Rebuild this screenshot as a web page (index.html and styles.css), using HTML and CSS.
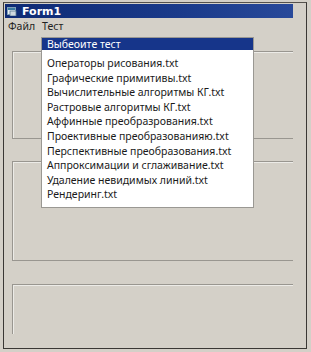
FILE: index.html
```html
<!DOCTYPE html>
<html>
    <head>
        <meta charset="utf-8">
        <title>Form1</title>
        <link rel="stylesheet" href="styles.css">
    </head>
    <body>
        <div class="window">
            <div class="title">
                <svg class="ico" width="10" height="9" viewBox="0 0 10 9">
                    <rect x="0.5" y="0.5" width="8" height="7" fill="#e8eef5" stroke="#7fa0b8"/>
                    <rect x="1" y="1" width="7" height="2" fill="#3a7aa0"/>
                    <rect x="3" y="4" width="6" height="5" fill="#cfd8e0" stroke="#5a7890" stroke-width="0.8"/>
                </svg>
                <span>Form1</span>
            </div>
            <div class="menu">
                <span class="item">Файл</span>
                <span class="item">Тест</span>
            </div>
            <div class="client">
                <div class="frame f1"></div>
                <div class="frame f2"></div>
                <div class="frame f3"></div>

                <div class="drop">
                    <div class="head">Выбеоите тест</div>
                    <ul class="list">
                        <li>Операторы рисования.txt</li>
                        <li>Графические примитивы.txt</li>
                        <li>Вычислительные алгоритмы КГ.txt</li>
                        <li>Растровые алгоритмы КГ.txt</li>
                        <li>Аффинные преобразрования.txt</li>
                        <li>Проективные преобразованияю.txt</li>
                        <li>Перспективные преобразования.txt</li>
                        <li>Аппроксимации и сглаживание.txt</li>
                        <li>Удаление невидимых линий.txt</li>
                        <li>Рендеринг.txt</li>
                    </ul>
                </div>
            </div>
        </div>
    </body>
</html>
```

FILE: styles.css
```css
*{
    margin:0;
    padding:0;
    box-sizing:border-box;
}
body{
    background-color:#d4d0c8;
    font-family:"Noto Sans", "DejaVu Sans", sans-serif;
    font-size:10.5px;
    color:#000;
}
.window{
    width:304px;
    height:347px;
    margin:2px 0 0 3px;
    border:1px solid #3a3835;
    border-top-color:#55524d;
    background-color:#d4d0c8;
    position:relative;
}
.title{
    height:14px;
    margin:1px 13px 0 1px;
    background:linear-gradient(to right,#0e2a74,#1a3a8a 60%,#28499a);
    color:#fff;
    font-weight:bold;
    display:flex;
    align-items:center;
    padding-left:2px;
    gap:5px;
}
.title span{
    font-family:"DejaVu Sans", sans-serif;
    font-size:11px;
}
.ico{
    display:block;
}
.menu{
    height:16px;
    display:flex;
    align-items:center;
    padding-left:4px;
    gap:7px;
}
.item{
    font-size:10.5px;
    color:#222;
}
.client{
    padding:17px 13px 0 8px;
    display:flex;
    flex-direction:column;
}
.frame{
    border-top:1px solid #999690;
    border-left:1px solid #999690;
    box-shadow:inset 1px 1px 0 #ecebe7;
}
.f1{
    height:88px;
    border-bottom:1px solid #999690;
}
.f2{
    height:100px;
    margin-top:22px;
    border-bottom:1px solid #999690;
}
.f3{
    height:50px;
    margin-top:23px;
}
.drop{
    position:absolute;
    left:37px;
    top:34px;
    width:213px;
    border:1px solid #9a9893;
    background-color:#fff;
}
.head{
    height:12px;
    line-height:12px;
    background-color:#16358a;
    color:#fff;
    padding-left:5px;
    font-size:10.5px;
}
.list{
    list-style:none;
    padding:6px 0 5px 5px;
}
.list li{
    height:14.6px;
    line-height:14.6px;
    font-size:10.5px;
    color:#1a1a1a;
    white-space:nowrap;
}
```
